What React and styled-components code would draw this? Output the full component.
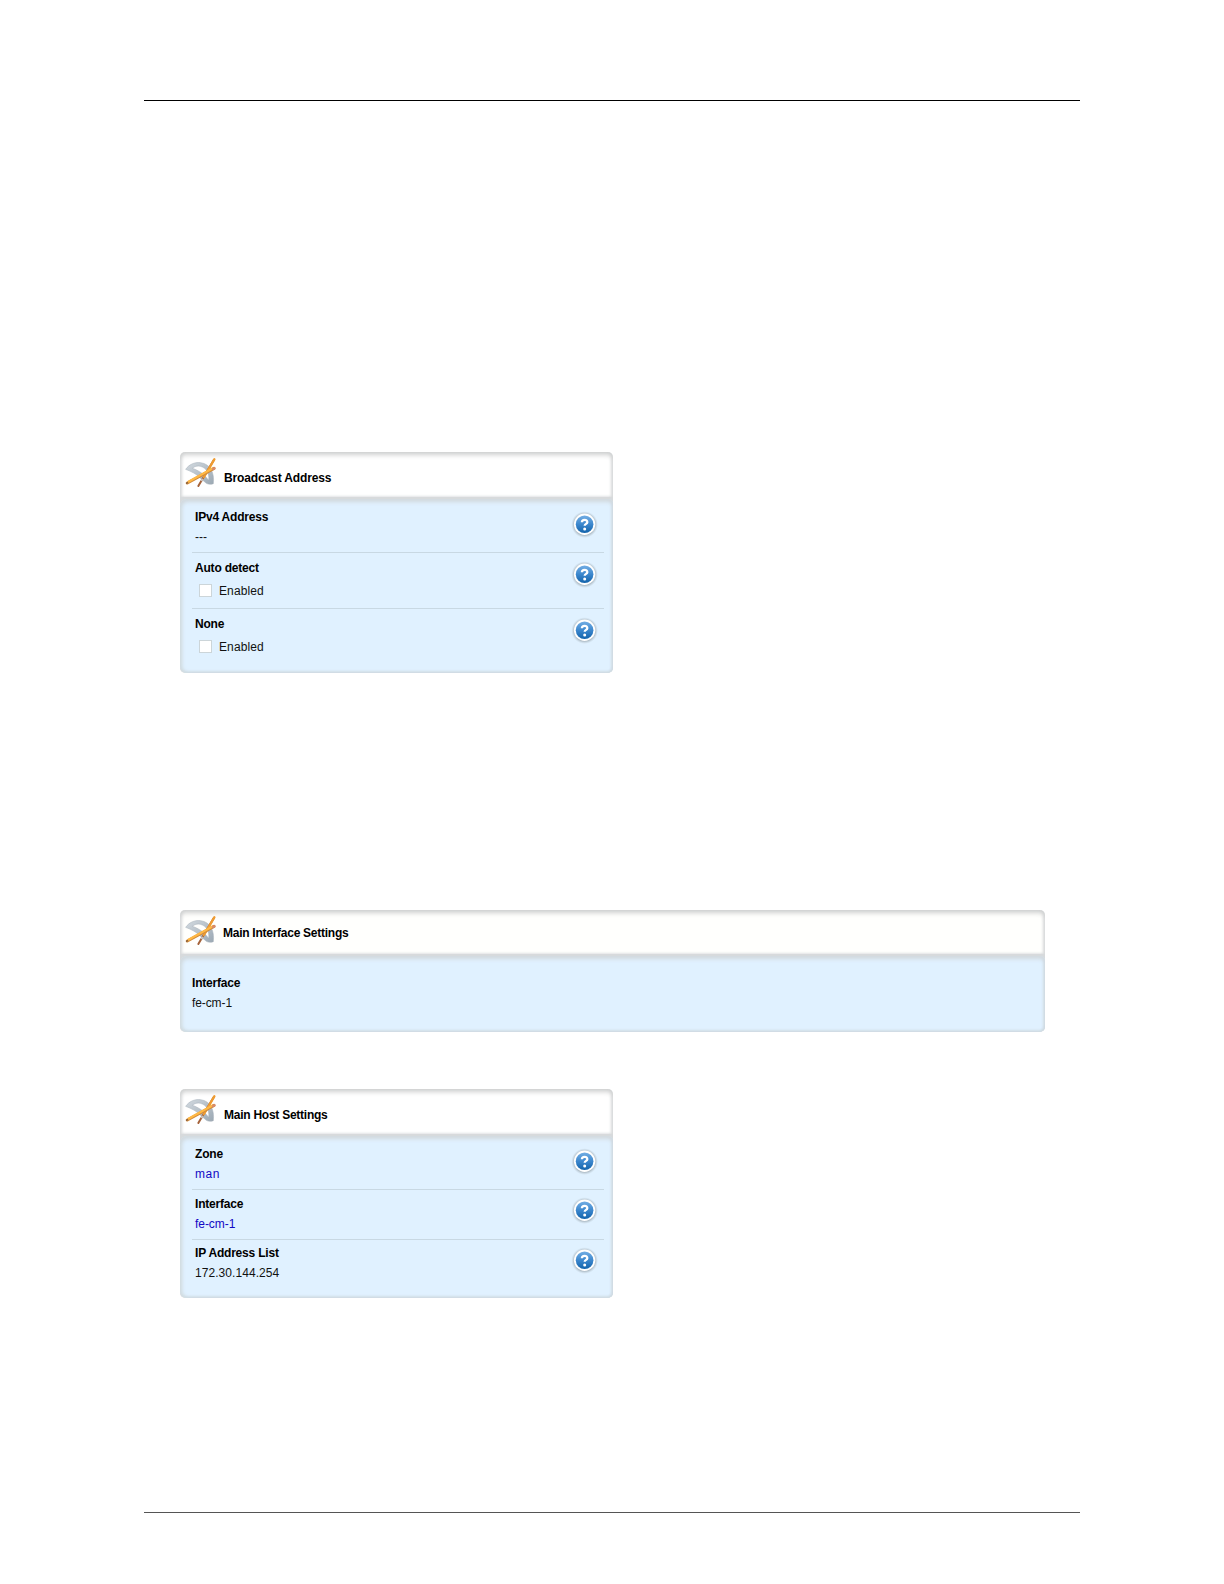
import React from 'react'
import styled, { createGlobalStyle } from 'styled-components'

const GlobalStyle = createGlobalStyle`
  * {
    box-sizing: border-box;
  }

  body {
    margin: 0;
    background: #fff;
    color: #000;
    font-family: "Liberation Sans", Arial, sans-serif;
    font-size: 12px;
  }
`

const broadcastRows = [
  { label: 'IPv4 Address', value: '---', height: 51, pad: 5, help: 8 },
  { label: 'Auto detect', checkbox: 'Enabled', height: 56, pad: 5, help: 7 },
  { label: 'None', checkbox: 'Enabled', height: 60, pad: 5, help: 6.5 },
]

const hostRows = [
  { label: 'Zone', value: 'man', link: true, height: 51, pad: 5, help: 8, spacing: 0.5 },
  { label: 'Interface', value: 'fe-cm-1', link: true, height: 50, pad: 4, help: 6, spacing: -0.05 },
  { label: 'IP Address List', value: '172.30.144.254', height: 54, pad: 3, help: 6, spacing: 0.06 },
]

const Page = styled.main`
  display: flex;
  flex-direction: column;
  width: 1224px;
  height: 1584px;
  padding: 100px 144px 71px;
`

const Rule = styled.div`
  flex: none;
  height: 1px;
  background: ${({ $color }) => $color};
`

const Content = styled.div`
  flex: 1;
  padding: 351px 35px 0 36px;
`

const Panel = styled.section`
  display: flex;
  flex-direction: column;
  width: ${({ $wide }) => ($wide ? '865px' : '433px')};
  height: ${({ $height }) => $height}px;
  margin-bottom: ${({ $gap }) => $gap || 0}px;
  border-radius: 5px;
  background: #d7dadc;
  overflow: hidden;
`

const PanelHeader = styled.header`
  display: flex;
  flex: none;
  height: ${({ $height }) => $height}px;
  padding: 6px 0 0 5px;
  border-radius: 5px 5px 0 0;
  background: ${({ $tint }) => $tint || '#fff'};
  box-shadow: inset 0 4px 5px -1px #d0d1d1, inset 2px 0 3px #dcdedf, inset -2px 0 3px #dcdedf;
`

const PanelTitle = styled.h2`
  margin: ${({ $top }) => $top}px 0 0 ${({ $left }) => $left}px;
  font-size: 12px;
  line-height: 20px;
  letter-spacing: ${({ $spacing }) => $spacing}px;
  white-space: nowrap;
`

const PanelBody = styled.div`
  flex: 1;
  margin-top: 2px;
  padding: 3px 9px 0 12px;
  border-radius: 7px 5px 5px 7px;
  background: #e0f1ff;
  box-shadow: inset 0 3px 4px #d3dadf, inset 2px 0 4px #d3dfe4, inset -1px 0 3px #cbd8e2,
    inset 0 -1px 3px #cdd8de;
`

const Row = styled.div`
  display: flex;
  justify-content: space-between;
  height: ${({ $height }) => $height}px;
  padding: 0 5px 0 3px;
  border-bottom: 1px solid #c8d8e3;

  &:last-child {
    border-bottom: 0;
  }
`

const Field = styled.div`
  padding-top: ${({ $top }) => $top}px;
  line-height: 20px;
  white-space: nowrap;
`

const Label = styled.div`
  font-weight: bold;
  letter-spacing: -0.2px;
`

const Value = styled.div`
  color: ${({ $link }) => ($link ? '#1208c4' : '#111')};
  letter-spacing: ${({ $spacing }) => $spacing || 0}px;
`

const CheckLine = styled.label`
  display: flex;
  align-items: center;
  margin: 3px 0 0 4px;
  color: #111;
  letter-spacing: 0.1px;
`

const Checkbox = styled.input`
  appearance: none;
  width: 13px;
  height: 13px;
  margin: 0 7px 1px 0;
  border: 1px solid #ccd5d9;
  background: #fff;
`

const HelpSvg = styled.svg`
  flex: none;
  margin-top: ${({ $top }) => $top}px;
`

const ToolsSvg = styled.svg`
  flex: none;
`

const HelpIcon = ({ top }) => (
  <HelpSvg $top={top} width="28" height="28" viewBox="0 0 28 28">
    <defs>
      <linearGradient id="helpBlue" x1="0" y1="0" x2="0" y2="1">
        <stop offset="0" stopColor="#73aee4" />
        <stop offset="0.5" stopColor="#3c87cd" />
        <stop offset="1" stopColor="#1263ab" />
      </linearGradient>
      <radialGradient id="helpShadow">
        <stop offset="0.74" stopColor="#8a979f" stopOpacity="0.8" />
        <stop offset="1" stopColor="#b9c6cf" stopOpacity="0" />
      </radialGradient>
    </defs>
    <circle cx="13.6" cy="14.6" r="13.4" fill="url(#helpShadow)" />
    <circle cx="13.6" cy="14.3" r="10.7" fill="#fff" />
    <circle cx="13.6" cy="14.3" r="8.8" fill="url(#helpBlue)" />
    <path
      d="M10.9 12.3c0-3.3 5.5-3.3 5.4-.1 0 1.8-2.6 1.6-2.6 3.6"
      fill="none"
      stroke="#fff"
      strokeWidth="2.3"
    />
    <circle cx="13.7" cy="18.9" r="1.5" fill="#fff" />
  </HelpSvg>
)

// protractor with a pencil and a brush crossed over it
const ToolsIcon = () => (
  <ToolsSvg width="31" height="31" viewBox="0 0 93 93">
    <defs>
      <linearGradient id="steel" x1="0" y1="0" x2="1" y2="1">
        <stop offset="0" stopColor="#d3dae0" />
        <stop offset="1" stopColor="#9ba8b3" />
      </linearGradient>
    </defs>
    <path
      fillRule="evenodd"
      d="M2 34C13 18 30 12 47 14c29 4 42 30 38 63-8 3-15 2-21-1L48 62C35 48 20 41 2 34Zm20-3c19 6 36 18 49 36 3-20-7-38-25-42-9-2-17 0-24 6Z"
      fill="url(#steel)"
      stroke="#a5afb8"
      strokeWidth="1.5"
    />
    <path d="M86 7 40 84" stroke="#a5623a" strokeWidth="6" strokeLinecap="round" />
    <path d="M88 4 57 57" stroke="#ef9c32" strokeWidth="7" strokeLinecap="round" />
    <path d="M53 62l-4 7" stroke="#c9c2bc" strokeWidth="6" />
    <path d="M7 75 87 31" stroke="#d08a3c" strokeWidth="9" strokeLinecap="round" />
    <path d="M9 72 85 30" stroke="#ffb844" strokeWidth="6" />
    <path d="M84 33l4-2" stroke="#d98a6e" strokeWidth="7" strokeLinecap="round" />
    <path d="M2 78l4-6 4 3Z" fill="#695041" />
  </ToolsSvg>
)

const SettingRow = ({ row }) => (
  <Row $height={row.height}>
    <Field $top={row.pad}>
      <Label>{row.label}</Label>
      {row.checkbox ? (
        <CheckLine>
          <Checkbox type="checkbox" />
          {row.checkbox}
        </CheckLine>
      ) : (
        <Value $link={row.link} $spacing={row.spacing}>{row.value}</Value>
      )}
    </Field>
    <HelpIcon top={row.help} />
  </Row>
)

const App = () => (
  <>
    <GlobalStyle />
    <Page>
      <Rule $color="#000" />
      <Content>
        <Panel $height={221} $gap={237}>
          <PanelHeader $height={45}>
            <ToolsIcon />
            <PanelTitle $top={10} $left={8} $spacing={-0.13}>Broadcast Address</PanelTitle>
          </PanelHeader>
          <PanelBody>
            {broadcastRows.map(row => <SettingRow key={row.label} row={row} />)}
          </PanelBody>
        </Panel>

        <Panel $wide $height={122} $gap={57}>
          <PanelHeader $height={44} $tint="#fffffd">
            <ToolsIcon />
            <PanelTitle $top={7} $left={7} $spacing={-0.26}>Main Interface Settings</PanelTitle>
          </PanelHeader>
          <PanelBody>
            <Field $top={14}>
              <Label>Interface</Label>
              <Value $spacing={-0.1}>fe-cm-1</Value>
            </Field>
          </PanelBody>
        </Panel>

        <Panel $height={209}>
          <PanelHeader $height={45}>
            <ToolsIcon />
            <PanelTitle $top={10} $left={8} $spacing={-0.25}>Main Host Settings</PanelTitle>
          </PanelHeader>
          <PanelBody>
            {hostRows.map(row => <SettingRow key={row.label} row={row} />)}
          </PanelBody>
        </Panel>
      </Content>
      <Rule $color="#555" />
    </Page>
  </>
)

export default App
